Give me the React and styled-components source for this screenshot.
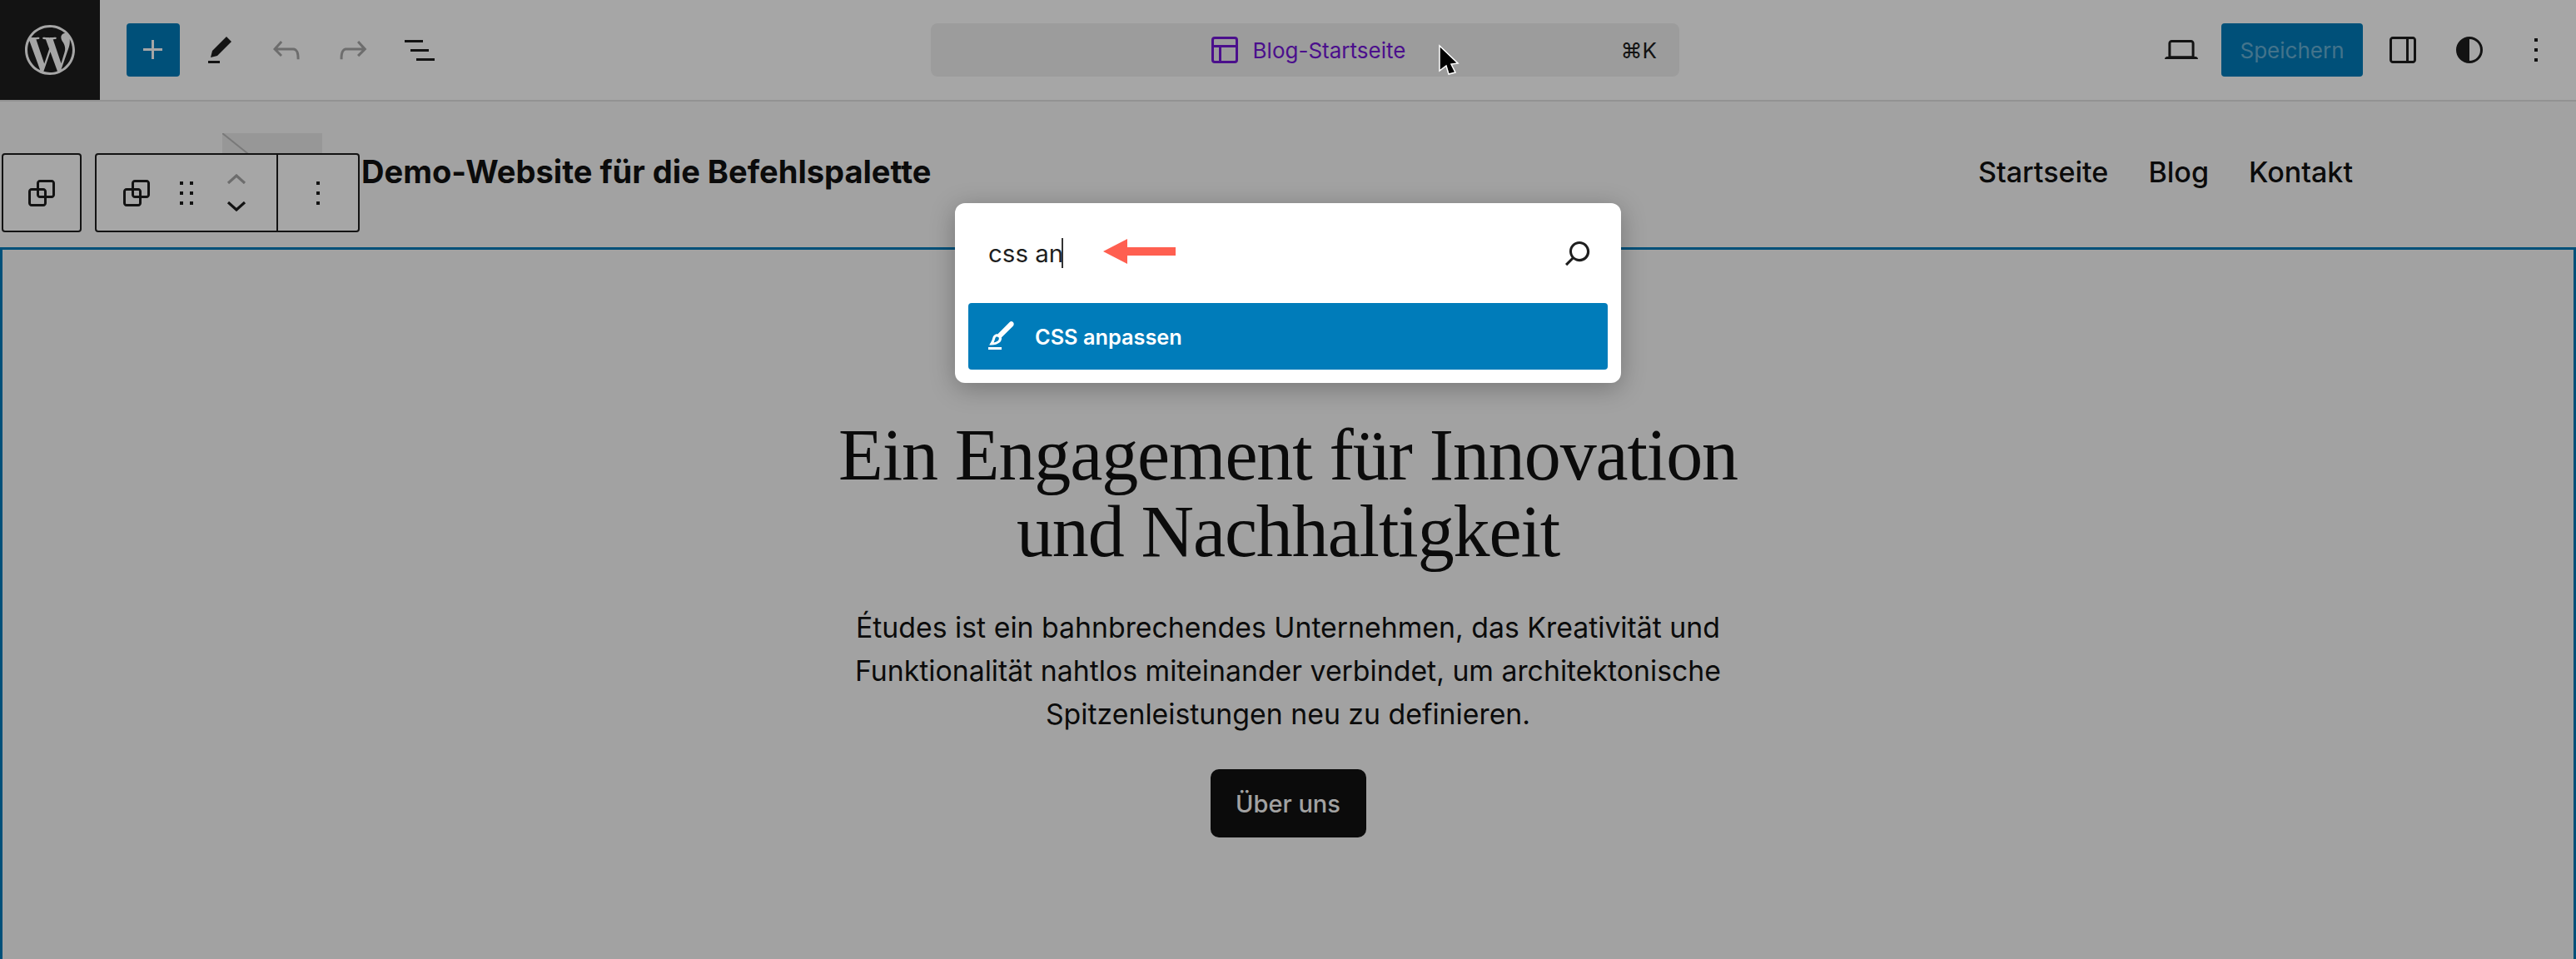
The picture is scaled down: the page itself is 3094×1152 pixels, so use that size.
import React from "react";
import styled, { createGlobalStyle } from "styled-components";
import { SiWordpress } from "react-icons/si";

const paths = {
  plus: "M11 12.5V17.5H12.5V12.5H17.5V11H12.5V6H11V11H6V12.5H11Z",
  pen: "m19 7-3-3-8.5 8.5-1 4 4-1L19 7Zm-7 11.5H5V20h7v-1.5Z",
  undo: "M18.3 11.7c-.6-.6-1.4-.9-2.3-.9H6.7l2.9-3.3-1.1-1-4.5 5L8.5 16l1-1-2.7-2.7H16c.5 0 .9.2 1.3.5 1 1 1 3.4 1 4.5v.3h1.5v-.2c0-1.5 0-4.3-1.5-5.7z",
  redo: "M15.6 6.5l-1.1 1 2.9 3.3H8c-.9 0-1.7.3-2.3.9-1.4 1.5-1.4 4.2-1.4 5.7v.2h1.5v-.3c0-1.1 0-3.5 1-4.5.3-.3.7-.5 1.3-.5h9.2L14.5 15l1.1 1.1 4.6-4.6-4.6-5z",
  list: "M3 6h11v1.5H3V6Zm3.5 5.5h11V13h-11v-1.5ZM21 17H10v1.5h11V17Z",
  search: "M13 5c-3.3 0-6 2.7-6 6 0 1.4.5 2.7 1.3 3.7l-3.8 3.8 1.1 1.1 3.8-3.8c1 .8 2.3 1.3 3.7 1.3 3.3 0 6-2.7 6-6S16.3 5 13 5zm0 10.5c-2.5 0-4.5-2-4.5-4.5s2-4.5 4.5-4.5 4.5 2 4.5 4.5-2 4.5-4.5 4.5z",
  layout: "M18 5.5H6a.5.5 0 00-.5.5v3h13V6a.5.5 0 00-.5-.5zm.5 5H10v8h8a.5.5 0 00.5-.5v-7.5zm-10 0h-3V18a.5.5 0 00.5.5h2.5v-8zM6 4h12a2 2 0 012 2v12a2 2 0 01-2 2H6a2 2 0 01-2-2V6a2 2 0 012-2z",
  laptop: "M20.5 16h-.7V8c0-1.1-.9-2-2-2H6.2c-1.1 0-2 .9-2 2v8h-.7c-.8 0-1.5.7-1.5 1.5h20c0-.8-.7-1.5-1.5-1.5zM5.7 8c0-.3.2-.5.5-.5h11.6c.3 0 .5.2.5.5v7.6H5.7V8z",
  sidebar: "M18 4H6c-1.1 0-2 .9-2 2v12c0 1.1.9 2 2 2h12c1.1 0 2-.9 2-2V6c0-1.1-.9-2-2-2zm-4 14.5H6c-.3 0-.5-.2-.5-.5V6c0-.3.2-.5.5-.5h8v13zm4.5-.5c0 .3-.2.5-.5.5h-2.5v-13H18c.3 0 .5.2.5.5v12z",
  styles: "M12 4a8 8 0 100 16 8 8 0 000-16zm0 14.5v-13a6.5 6.5 0 010 13z",
  more: "M13 19h-2v-2h2v2zm0-6h-2v-2h2v2zm0-6h-2V5h2v2z",
  drag: "M8 7h2V5H8v2zm0 6h2v-2H8v2zm0 6h2v-2H8v2zm6-14v2h2V5h-2zm0 8h2v-2h-2v2zm0 6h2v-2h-2v2z",
  group: "M18 4h-7c-1.1 0-2 .9-2 2v3H6c-1.1 0-2 .9-2 2v7c0 1.1.9 2 2 2h7c1.1 0 2-.9 2-2v-3h3c1.1 0 2-.9 2-2V6c0-1.1-.9-2-2-2zm-4.5 14c0 .3-.2.5-.5.5H6c-.3 0-.5-.2-.5-.5v-7c0-.3.2-.5.5-.5h3V13c0 1.1.9 2 2 2h2.5v3zm0-4.5H11c-.3 0-.5-.2-.5-.5v-2.5H13c.3 0 .5.2.5.5v2.5zm5-.5c0 .3-.2.5-.5.5h-3V11c0-1.1-.9-2-2-2h-2.5V6c0-.3.2-.5.5-.5h7c.3 0 .5.2.5.5v7z",
  brush: "M4 20h8v-1.5H4V20zM18.9 3.5c-.6-.6-1.5-.6-2.1 0l-7.2 7.2c-.4-.1-.7 0-1.1.1-.5.2-1.5.7-1.9 2.2-.4 1.7-.8 2.2-1.1 2.7-.1.1-.2.3-.3.4l-.6 1.1H6c2 0 3.4-.4 4.7-1.4.8-.6 1.2-1.4 1.3-2.3 0-.3 0-.5-.1-.7L19 5.7c.5-.6.5-1.6-.1-2.2zM9.7 14.7c-.7.5-1.5.8-2.4 1 .2-.5.5-1.2.8-2.3.2-.6.4-1 .8-1.1.5-.1 1 .1 1.3.3.2.2.3.5.2.8 0 .3-.1.9-.7 1.3z",
};

const Icon = ({ name, size = 48 }) => (
  <svg width={size} height={size} viewBox="0 0 24 24" fill="currentColor">
    <path d={paths[name]} />
  </svg>
);

const GlobalStyle = createGlobalStyle`
  html, body { margin: 0; padding: 0; background: #f9f9f9; }
  * { box-sizing: border-box; }
`;

const Page = styled.div`
  position: relative;
  width: 3094px;
  height: 1152px;
  overflow: hidden;
  background: #f9f9f9;
  color: #111;
  font-family: Inter, "Liberation Sans", sans-serif;
`;

const TopBar = styled.header`
  display: flex;
  align-items: center;
  height: 122px;
  background: #fff;
  border-bottom: 2px solid #e0e0e0;
  color: #1e1e1e;
`;

const LeftTools = styled.div`
  flex: 0 0 1118px;
  display: flex;
  align-items: center;
  gap: 16px;
`;

const LogoBox = styled.div`
  width: 120px;
  height: 120px;
  margin-right: 16px;
  display: grid;
  place-items: center;
  background: #1e1e1e;
  color: #fff;
`;

const IconButton = styled.div`
  width: 64px;
  height: 64px;
  display: grid;
  place-items: center;
  border-radius: 4px;
  color: ${(p) => (p.$disabled ? "#a8a8a8" : "#1e1e1e")};
  background: ${(p) => (p.$primary ? "#007cba" : "transparent")};
  ${(p) => p.$primary && "color: #fff;"}
`;

const CommandBar = styled.div`
  position: relative;
  flex: 0 0 899px;
  height: 64px;
  display: flex;
  align-items: center;
  justify-content: center;
  gap: 10px;
  border-radius: 8px;
  background: #f0f0f0;
  color: #7317d7;
  font-size: 26px;
`;

const Shortcut = styled.span`
  position: absolute;
  right: 27px;
  color: #1e1e1e;
  font-size: 26px;
`;

const RightTools = styled.div`
  margin-left: auto;
  padding-right: 16px;
  display: flex;
  align-items: center;
  gap: 16px;
`;

const SaveButton = styled.div`
  width: 170px;
  height: 64px;
  display: grid;
  place-items: center;
  border-radius: 4px;
  background: #007cba;
  color: rgba(255, 255, 255, 0.42);
  font-size: 26px;
`;

const SiteHeader = styled.div`
  height: 175px;
  padding: 38px 268px 0 267px;
  display: flex;
  align-items: flex-start;
`;

const LogoPlaceholder = styled.svg`
  flex: 0 0 120px;
  height: 96px;
  margin-right: 47px;
  background: #e8e8e8;
`;

const SiteTitle = styled.div`
  height: 92px;
  display: flex;
  align-items: center;
  font-size: 38.1px;
  font-weight: 700;
`;

const Nav = styled.nav`
  height: 93px;
  margin-left: auto;
  display: flex;
  align-items: center;
  gap: 48px;
  font-size: 34.1px;
  font-weight: 500;
`;

const Hero = styled.section`
  height: 900px;
  padding-top: 201px;
  display: flex;
  flex-direction: column;
  align-items: center;
  border: 3px solid #007cba;
  border-bottom: 0;
`;

const Heading = styled.h1`
  margin: 0;
  font-family: "Liberation Serif", serif;
  font-weight: 400;
  font-size: 88px;
  line-height: 92px;
  letter-spacing: -1.1px;
  text-align: center;
`;

const Intro = styled.p`
  margin: 43px 0 0;
  font-size: 33.8px;
  line-height: 52px;
  text-align: center;
`;

const HeroButton = styled.div`
  margin-top: 40px;
  width: 187px;
  height: 82px;
  display: grid;
  place-items: center;
  border-radius: 10px;
  background: #111;
  color: #f9f9f9;
  font-size: 29px;
  font-weight: 500;
`;

const BlockTools = styled.div`
  position: absolute;
  left: 2px;
  top: 184px;
  display: flex;
  gap: 16px;
`;

const ToolGroup = styled.div`
  height: 95px;
  display: flex;
  align-items: center;
  background: #fff;
  border: 2px solid #1e1e1e;
  border-radius: 4px;
  color: #1e1e1e;
`;

const ToolCell = styled.div`
  width: ${(p) => p.$w}px;
  height: 100%;
  display: flex;
  align-items: center;
  justify-content: center;
  ${(p) => p.$divider && "border-left: 2px solid #1e1e1e;"}

  svg {
    flex-shrink: 0;
  }
`;

const Movers = styled.div`
  width: 48px;
  display: flex;
  flex-direction: column;
  align-items: center;
  gap: 21px;
`;

const Backdrop = styled.div`
  position: absolute;
  inset: 0;
  background: rgba(0, 0, 0, 0.35);
`;

const Palette = styled.div`
  position: absolute;
  left: 1147px;
  top: 244px;
  width: 800px;
  height: 216px;
  padding: 0 16px;
  background: #fff;
  border-radius: 12px;
  box-shadow: 0 6px 30px rgba(0, 0, 0, 0.28);
`;

const SearchRow = styled.div`
  height: 120px;
  padding: 0 12px 0 24px;
  display: flex;
  align-items: center;
  justify-content: space-between;
  color: #1e1e1e;
`;

const Query = styled.div`
  display: flex;
  align-items: center;
  font-size: 29.5px;
`;

const Caret = styled.span`
  width: 2px;
  height: 36px;
  margin-left: -2px;
  background: #333;
`;

const Result = styled.div`
  height: 80px;
  padding-left: 16px;
  display: flex;
  align-items: center;
  gap: 16px;
  border-radius: 4px;
  background: #007cba;
  color: #fff;
  font-size: 25.3px;
  font-weight: 600;
`;

const Annotation = styled.svg`
  position: absolute;
  left: 1325px;
  top: 287px;
`;

const Pointer = styled.svg`
  position: absolute;
  left: 1727px;
  top: 53px;
`;

export default function App() {
  return (
    <Page>
      <GlobalStyle />
      <TopBar>
        <LeftTools>
          <LogoBox>
            <SiWordpress size={60} />
          </LogoBox>
          <IconButton $primary><Icon name="plus" /></IconButton>
          <IconButton><Icon name="pen" /></IconButton>
          <IconButton $disabled><Icon name="undo" /></IconButton>
          <IconButton $disabled><Icon name="redo" /></IconButton>
          <IconButton><Icon name="list" /></IconButton>
        </LeftTools>
        <CommandBar>
          <Icon name="layout" />
          <span>Blog-Startseite</span>
          <Shortcut>⌘K</Shortcut>
        </CommandBar>
        <RightTools>
          <IconButton><Icon name="laptop" /></IconButton>
          <SaveButton>Speichern</SaveButton>
          <IconButton><Icon name="sidebar" /></IconButton>
          <IconButton><Icon name="styles" /></IconButton>
          <IconButton><Icon name="more" /></IconButton>
        </RightTools>
      </TopBar>

      <SiteHeader>
        <LogoPlaceholder viewBox="0 0 120 96">
          <line x1="0" y1="0" x2="120" y2="96" stroke="#bbb" strokeWidth="2" />
        </LogoPlaceholder>
        <SiteTitle>Demo-Website für die Befehlspalette</SiteTitle>
        <Nav>
          <span>Startseite</span>
          <span>Blog</span>
          <span>Kontakt</span>
        </Nav>
      </SiteHeader>

      <Hero>
        <Heading>
          Ein Engagement für Innovation
          <br />
          und Nachhaltigkeit
        </Heading>
        <Intro>
          Études ist ein bahnbrechendes Unternehmen, das Kreativität und
          <br />
          Funktionalität nahtlos miteinander verbindet, um architektonische
          <br />
          Spitzenleistungen neu zu definieren.
        </Intro>
        <HeroButton>Über uns</HeroButton>
      </Hero>

      <BlockTools>
        <ToolGroup>
          <ToolCell $w={92}><Icon name="group" /></ToolCell>
        </ToolGroup>
        <ToolGroup>
          <ToolCell $w={96}><Icon name="group" /></ToolCell>
          <ToolCell $w={24}><Icon name="drag" /></ToolCell>
          <ToolCell $w={96}>
            <Movers>
              <svg width="24" height="12" viewBox="0 0 24 12" fill="none" stroke="#a8a8a8" strokeWidth="3.2">
                <path d="M2 11 12 2l10 9" />
              </svg>
              <svg width="24" height="12" viewBox="0 0 24 12" fill="none" stroke="#1e1e1e" strokeWidth="3.2">
                <path d="M2 1l10 9 10-9" />
              </svg>
            </Movers>
          </ToolCell>
          <ToolCell $w={98} $divider><Icon name="more" /></ToolCell>
        </ToolGroup>
      </BlockTools>

      <Backdrop />

      <Palette>
        <SearchRow>
          <Query>
            css an
            <Caret />
          </Query>
          <Icon name="search" />
        </SearchRow>
        <Result>
          <Icon name="brush" />
          <span>CSS anpassen</span>
        </Result>
      </Palette>

      <Annotation width="88" height="30" viewBox="0 0 88 30">
        <path d="M0 15 29 0v10h58v10H29v10z" fill="#ff5f50" />
      </Annotation>

      <Pointer width="26" height="38" viewBox="0 0 26 38">
        <path d="M2 2v30l8-6 3 10 8-2-5-10 8-1z" fill="#000" stroke="#fff" strokeWidth="1.5" />
      </Pointer>
    </Page>
  );
}
